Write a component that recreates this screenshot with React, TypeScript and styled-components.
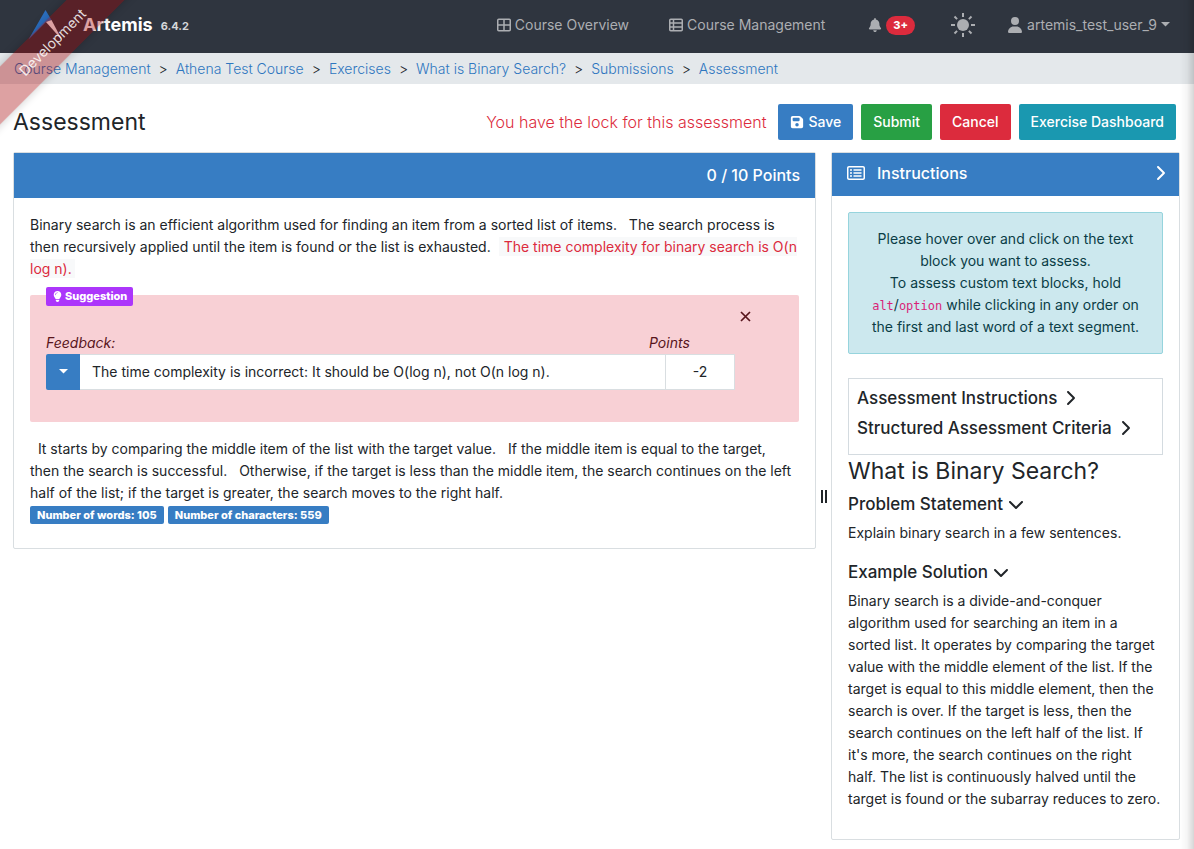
import React from "react";
import styled, { createGlobalStyle } from "styled-components";
import {
  FaBell,
  FaChevronDown,
  FaChevronRight,
  FaFloppyDisk,
  FaLightbulb,
  FaRegRectangleList,
  FaUser,
} from "react-icons/fa6";

const GlobalStyle = createGlobalStyle`
  *, *::before, *::after { box-sizing: border-box; }
  body {
    margin: 0;
    background: #fff;
    color: #212529;
    font-family: Inter, "Liberation Sans", sans-serif;
    font-size: 14px;
    line-height: 22px;
  }
  button, input { font: inherit; }
  h1, h2, h3, p { margin: 0; }
  a { text-decoration: none; }
`;

const Page = styled.div`
  position: relative;
  overflow-x: hidden;
  min-height: 100vh;
`;

const EdgeShadow = styled.div`
  position: fixed;
  top: 0;
  right: 0;
  bottom: 0;
  width: 14px;
  background: linear-gradient(to right, rgba(0, 0, 0, 0), rgba(0, 0, 0, 0.04) 50%, rgba(0, 0, 0, 0.16));
  pointer-events: none;
`;

const RibbonFrame = styled.div`
  position: absolute;
  top: 0;
  left: 0;
  width: 150px;
  height: 150px;
  overflow: hidden;
  pointer-events: none;
`;

const Ribbon = styled.div`
  position: absolute;
  top: 27px;
  left: -52px;
  width: 200px;
  height: 41px;
  padding-left: 14px;
  background: rgba(164, 0, 4, 0.37);
  box-shadow: 0 0 10px rgba(0, 0, 0, 0.2);
  color: rgba(255, 255, 255, 0.85);
  font-size: 14px;
  line-height: 40px;
  text-align: center;
  transform: rotate(-45deg);
`;

const Navbar = styled.header`
  display: flex;
  align-items: center;
  justify-content: space-between;
  height: 53px;
  padding: 0 24px 3px 28px;
  background: #2f353f;
  color: #acaeb2;
`;

const Brand = styled.a`
  display: flex;
  align-items: center;
  color: #fff;
  font-size: 18px;
  font-weight: 700;
  svg { margin-right: 20px; }
`;

const Version = styled.span`
  margin-left: 8px;
  padding-top: 2px;
  color: #d5d7d9;
  font-size: 11px;
`;

const NavLinks = styled.nav`
  display: flex;
  align-items: center;
`;

const NavLink = styled.a<{ $gap: number }>`
  display: flex;
  align-items: center;
  gap: 4px;
  margin-left: ${(p) => p.$gap}px;
  color: inherit;
`;

const IconButton = styled.button<{ $gap: number }>`
  display: flex;
  align-items: center;
  gap: 4px;
  margin: 0 0 0 ${(p) => p.$gap}px;
  padding: 0;
  border: 0;
  background: none;
  color: inherit;
  cursor: pointer;
`;

const Counter = styled.span`
  padding: 0 7px;
  border-radius: 10px;
  background: #dc2b3d;
  color: #fff;
  font-size: 11px;
  font-weight: 800;
  line-height: 19px;
`;

const Breadcrumbs = styled.nav`
  display: flex;
  gap: 8px;
  height: 31px;
  padding: 0 14px;
  background: #e4e8eb;
  font-weight: 300;
  line-height: 31px;
  a { color: #2e76bf; }
`;

const Main = styled.main`
  padding: 20px 14px 10px 13px;
`;

const TitleRow = styled.div`
  display: flex;
  align-items: center;
  gap: 8px;
  padding-right: 4px;
  h1 {
    flex: 1;
    font-size: 23px;
    font-weight: 400;
    line-height: 36px;
  }
`;

const LockNote = styled.span`
  margin-right: 4px;
  color: #dc2b3d;
  font-size: 16px;
  font-weight: 350;
`;

const Button = styled.button<{ $color: string }>`
  display: flex;
  align-items: center;
  gap: 4px;
  height: 36px;
  padding: 0 12px;
  border: 0;
  border-radius: 2px;
  background: ${(p) => p.$color};
  color: #fff;
  font-weight: 500;
`;

const Columns = styled.div`
  display: grid;
  grid-template-columns: minmax(0, 1fr) 15px 349px;
  margin-top: 12px;
`;

const Card = styled.section`
  align-self: start;
  border: 1px solid #d9dee1;
  border-radius: 2px;
`;

const CardHeader = styled.div`
  display: flex;
  align-items: center;
  height: 45px;
  padding: 0 15px 2px;
  background: #377dc3;
  color: #fff;
  font-size: 16px;
`;

const PanelHeader = styled(CardHeader)`
  height: 43px;
  padding: 0 11px 3px 15px;
`;

const Score = styled.span`
  margin-left: auto;
  font-weight: 500;
`;

const PanelTitle = styled.h2`
  flex: 1;
  margin-left: 12px;
  font-size: 16px;
  font-weight: 500;
`;

const Submission = styled.div`
  padding: 16px 16px 24px;
`;

const Block = styled.span`
  margin-right: 8px;
`;

const MarkedBlock = styled.span`
  padding: 1px 3px 1px 5px;
  background: #f8f9fa;
  color: #dc2b3d;
`;

const Feedback = styled.section`
  position: relative;
  margin: 15px 0 16px;
  padding: 37px 64px 32px 16px;
  border-radius: 2px;
  background: #f8d0d5;
  color: #58151c;
`;

const Suggestion = styled.span`
  position: absolute;
  top: -8px;
  left: 16px;
  display: flex;
  align-items: center;
  gap: 2px;
  padding: 0 6px;
  border-radius: 2px;
  background: #ac36fb;
  color: #fff;
  font-size: 11px;
  font-weight: 800;
  line-height: 19px;
`;

const CloseButton = styled.button`
  position: absolute;
  top: 16px;
  right: 48px;
  display: flex;
  padding: 0;
  border: 0;
  background: none;
  color: inherit;
`;

const Fields = styled.div`
  display: grid;
  grid-template-columns: 34px minmax(0, 1fr) 70px;
`;

const FeedbackLabel = styled.label`
  grid-column: span 2;
  font-style: italic;
`;

const PointsLabel = styled.label`
  margin-left: -16px;
  font-style: italic;
`;

const DropButton = styled.button`
  display: flex;
  align-items: center;
  justify-content: center;
  height: 36px;
  border: 0;
  border-radius: 2px 0 0 2px;
  background: #377dc3;
  color: #fff;
`;

const Field = styled.input<{ $center?: boolean }>`
  width: 100%;
  height: 36px;
  padding: 0 12px 1px;
  border: 1px solid #d9dee1;
  border-left-width: ${(p) => (p.$center ? 1 : 0)}px;
  border-right-width: ${(p) => (p.$center ? 1 : 0)}px;
  background: #fff;
  color: #212529;
  text-align: ${(p) => (p.$center ? "center" : "left")};
`;

const Counts = styled.div`
  display: flex;
  gap: 4px;
  margin-top: 2px;
`;

const Count = styled.span`
  padding: 0 7px;
  border-radius: 2px;
  background: #377dc3;
  color: #fff;
  font-size: 11px;
  font-weight: 800;
  line-height: 18px;
`;

const Divider = styled.div`
  display: flex;
  align-items: center;
  justify-content: center;
  gap: 2px;
  cursor: col-resize;
  &::before, &::after {
    content: "";
    width: 2px;
    height: 13px;
    background: #212529;
  }
`;

const PanelBody = styled.div`
  padding: 16px;
`;

const Hint = styled.div`
  padding: 15px 16px;
  border: 1px solid #96d4dd;
  border-radius: 2px;
  background: #cce8ee;
  color: #0a3d46;
  text-align: center;
`;

const Key = styled.code`
  color: #d91f78;
  font-family: "DejaVu Sans Mono", "Liberation Mono", monospace;
  font-size: 12px;
  line-height: 12px;
`;

const Criteria = styled.div`
  margin-top: 24px;
  padding: 4px 8px 11px;
  border: 1px solid #d4dbe0;
`;

const Toggle = styled.button`
  display: flex;
  align-items: center;
  gap: 5px;
  padding: 0;
  border: 0;
  background: none;
  color: inherit;
  font-size: 17px;
  font-weight: 500;
  line-height: 30px;
`;

const ExerciseTitle = styled.h2`
  margin-bottom: 2px;
  font-size: 23px;
  font-weight: 400;
  line-height: 32px;
`;

const PanelText = styled.p`
  padding: 3px 0 13px;
`;

const Logo = () => (
  <svg width="35" height="32" viewBox="0 0 35 32" aria-hidden="true">
    <path d="M17.5 1 0.5 30.5 18 13 23.5 11Z" fill="#2b6fc0" />
    <path d="M18 13 23.5 11 34 31Z" fill="#fff" />
  </svg>
);

const GridIcon = () => (
  <svg width="14" height="14" viewBox="0 0 14 14" fill="none" stroke="currentColor" strokeWidth="1.5" aria-hidden="true">
    <rect x="0.75" y="1.25" width="12.5" height="11.5" rx="1" />
    <path d="M7 1v12M1 7h12" />
  </svg>
);

const ListIcon = () => (
  <svg width="14" height="14" viewBox="0 0 14 14" fill="none" stroke="currentColor" strokeWidth="1.5" aria-hidden="true">
    <rect x="0.75" y="1.25" width="12.5" height="11.5" rx="1" />
    <path d="M4.5 1v12M1 5h12M1 9h12" />
  </svg>
);

const SunIcon = () => (
  <svg width="24" height="24" viewBox="0 0 24 24" aria-hidden="true">
    <circle cx="12" cy="12" r="6" fill="currentColor" />
    <path
      d="M12 0v4M12 20v4M0 12h4M20 12h4M3.5 3.5l2.6 2.6M17.9 17.9l2.6 2.6M3.5 20.5l2.6-2.6M17.9 6.1l2.6-2.6"
      stroke="currentColor"
      strokeWidth="2"
    />
  </svg>
);

const Caret = () => (
  <svg width="9" height="8" viewBox="0 0 9 8" fill="currentColor" aria-hidden="true">
    <path d="M0 1h9L4.500 5.500Z" />
  </svg>
);

const CrossIcon = () => (
  <svg width="11" height="11" viewBox="0 0 11 11" fill="none" stroke="currentColor" strokeWidth="1.7" aria-hidden="true">
    <path d="M1 1 10 10M10 1 1 10" />
  </svg>
);

const crumbs = [
  "Course Management",
  "Athena Test Course",
  "Exercises",
  "What is Binary Search?",
  "Submissions",
  "Assessment",
];

export default function App() {
  return (
    <Page>
      <GlobalStyle />
      <Navbar>
        <Brand href="#">
          <Logo />
          Artemis<Version>6.4.2</Version>
        </Brand>
        <NavLinks>
          <NavLink href="#" $gap={0}><GridIcon />Course Overview</NavLink>
          <NavLink href="#" $gap={40}><ListIcon />Course Management</NavLink>
          <IconButton $gap={43} aria-label="Notifications">
            <FaBell size={14} />
            <Counter>3+</Counter>
          </IconButton>
          <IconButton $gap={36} aria-label="Switch theme"><SunIcon /></IconButton>
          <IconButton $gap={32}>
            <FaUser size={16} />
            artemis_test_user_9
            <Caret />
          </IconButton>
        </NavLinks>
      </Navbar>
      <Breadcrumbs aria-label="Breadcrumb">
        {crumbs.map((name, i) => (
          <React.Fragment key={name}>
            {i > 0 && <span>&gt;</span>}
            <a href="#">{name}</a>
          </React.Fragment>
        ))}
      </Breadcrumbs>
      <Main>
        <TitleRow>
          <h1>Assessment</h1>
          <LockNote>You have the lock for this assessment</LockNote>
          <Button $color="#377dc3"><FaFloppyDisk size={14} />Save</Button>
          <Button $color="#28a044">Submit</Button>
          <Button $color="#dc2b3d">Cancel</Button>
          <Button $color="#1a98b0">Exercise Dashboard</Button>
        </TitleRow>
        <Columns>
          <Card>
            <CardHeader><Score>0 / 10 Points</Score></CardHeader>
            <Submission>
              <p>
                <Block>Binary search is an efficient algorithm used for finding an item from a sorted list of items.</Block>{" "}
                <Block>The search process is then recursively applied until the item is found or the list is exhausted.</Block>
                <MarkedBlock>The time complexity for binary search is O(n log n).</MarkedBlock>
              </p>
              <Feedback>
                <Suggestion><FaLightbulb size={11} />Suggestion</Suggestion>
                <CloseButton aria-label="Dismiss feedback"><CrossIcon /></CloseButton>
                <Fields>
                  <FeedbackLabel htmlFor="feedback">Feedback:</FeedbackLabel>
                  <PointsLabel htmlFor="points">Points</PointsLabel>
                  <DropButton aria-label="Feedback options"><Caret /></DropButton>
                  <Field id="feedback" defaultValue="The time complexity is incorrect: It should be O(log n), not O(n log n)." />
                  <Field id="points" $center defaultValue="-2" />
                </Fields>
              </Feedback>
              <p>
                <Block>&nbsp; It starts by comparing the middle item of the list with the target value.</Block>{" "}
                <Block>If the middle item is equal to the target, then the search is successful.</Block>{" "}
                <Block>Otherwise, if the target is less than the middle item, the search continues on the left half of the list; if the target is greater, the search moves to the right half.</Block>
              </p>
              <Counts>
                <Count>Number of words: 105</Count>
                <Count>Number of characters: 559</Count>
              </Counts>
            </Submission>
          </Card>
          <Divider />
          <Card>
            <PanelHeader>
              <FaRegRectangleList size={18} />
              <PanelTitle>Instructions</PanelTitle>
              <FaChevronRight size={16} />
            </PanelHeader>
            <PanelBody>
              <Hint>
                Please hover over and click on the text block you want to assess.
                <br />
                To assess custom text blocks, hold <Key>alt</Key>/<Key>option</Key> while clicking in any order on the first and last word of a text segment.
              </Hint>
              <Criteria>
                <Toggle>Assessment Instructions <FaChevronRight size={16} /></Toggle>
                <Toggle>Structured Assessment Criteria <FaChevronRight size={16} /></Toggle>
              </Criteria>
              <ExerciseTitle>What is Binary Search?</ExerciseTitle>
              <Toggle>Problem Statement <FaChevronDown size={16} /></Toggle>
              <PanelText>Explain binary search in a few sentences.</PanelText>
              <Toggle>Example Solution <FaChevronDown size={16} /></Toggle>
              <PanelText>
                Binary search is a divide-and-conquer algorithm used for searching an item in a sorted list. It operates
                by comparing the target value with the middle element of the list. If the target is equal to this middle
                element, then the search is over. If the target is less, then the search continues on the left half of
                the list. If it's more, the search continues on the right half. The list is continuously halved until
                the target is found or the subarray reduces to zero.
              </PanelText>
            </PanelBody>
          </Card>
        </Columns>
      </Main>
      <RibbonFrame><Ribbon>Development</Ribbon></RibbonFrame>
      <EdgeShadow />
    </Page>
  );
}
